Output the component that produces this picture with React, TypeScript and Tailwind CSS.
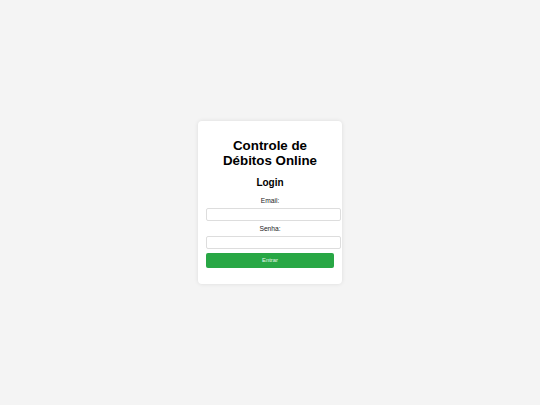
export default function App() {
  return (
    <div className="w-full min-h-screen h-[405px] bg-[#f4f4f4] flex items-center justify-center font-['Liberation_Sans',Arial,sans-serif]">
      <div className="w-[144px] bg-white rounded-[4px] shadow-[0_0_4px_rgba(0,0,0,0.1)] px-[8.33px] pt-[8.33px] pb-[16.4px] text-center">
        <h1 className="mt-[8.9px] mb-[8.9px] text-[13.33px] leading-[15.3px] font-bold text-black">
          Controle de
          <br />
          Débitos Online
        </h1>
        <h2 className="mb-[8.3px] text-[10px] leading-[11.5px] font-bold text-black">Login</h2>
        <form className="flex flex-col items-start" onSubmit={(e) => e.preventDefault()}>
          <label className="block w-full text-[6.67px] leading-[7.7px] text-[#222] mb-[2.8px]">Email:</label>
          <input
            type="email"
            className="block w-[134.4px] h-[13.4px] border border-[#ddd] rounded-[2px] bg-white outline-none"
          />
          <label className="block w-full text-[6.67px] leading-[7.7px] text-[#222] mt-[4.4px] mb-[2.8px]">Senha:</label>
          <input
            type="password"
            className="block w-[134.4px] h-[13.4px] border border-[#ddd] rounded-[2px] bg-white outline-none"
          />
          <button
            type="submit"
            className="mt-[4.3px] w-full h-[14.6px] bg-[#28a745] rounded-[2px] text-white/90 text-[5.8px] leading-none flex items-center justify-center"
          >
            Entrar
          </button>
        </form>
      </div>
    </div>
  );
}
